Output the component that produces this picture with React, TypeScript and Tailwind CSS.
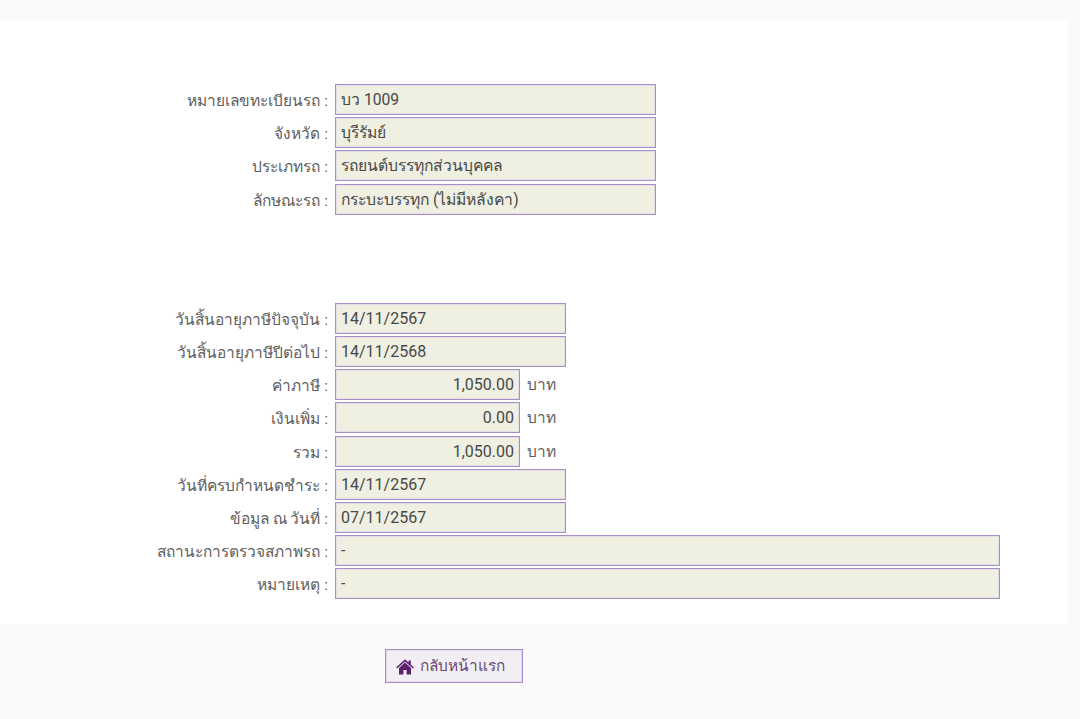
const FF = "font-['Roboto','Noto_Sans','Noto_Sans_CJK_SC',sans-serif]";

function Field({ label, value, width, right, unit, num }: { label: string; value: string; width: string; right?: boolean; unit?: boolean; num?: boolean }) {
  return (
    <div className="flex h-[33.2px] items-start">
      <div className="w-[328px] pt-[6px] text-right text-[15.5px] leading-[22px] text-[#606060]">{label} :</div>
      <div
        className={`ml-[7px] h-[31px] ${width} border border-[#a88fc6] bg-[#efefe2] pl-[5px] pr-[5px] leading-[30px] text-[#484848] shadow-[inset_0_0_0_1px_#e4dfe6] ${num ? 'text-[16px]' : 'text-[15.7px]'} ${right ? 'text-right' : ''}`}
      >
        {value}
      </div>
      {unit && <div className="ml-[7px] pt-[5px] text-[15.5px] leading-[22px] text-[#606060]">บาท</div>}
    </div>
  );
}

export default function App() {
  return (
    <div className={`h-[719px] overflow-hidden bg-[#fafafa] pt-[20px] ${FF}`}>
      <div className="h-[604px] w-[1068px] bg-white pt-[64px]">
        <Field label="หมายเลขทะเบียนรถ" value="บว 1009" width="w-[321px]" />
        <Field label="จังหวัด" value="บุรีรัมย์" width="w-[321px]" />
        <Field label="ประเภทรถ" value="รถยนต์บรรทุกส่วนบุคคล" width="w-[321px]" />
        <Field label="ลักษณะรถ" value="กระบะบรรทุก (ไม่มีหลังคา)" width="w-[321px]" />
        <div className="h-[86px]" />
        <Field label="วันสิ้นอายุภาษีปัจจุบัน" value="14/11/2567" width="w-[231px]" num />
        <Field label="วันสิ้นอายุภาษีปีต่อไป" value="14/11/2568" width="w-[231px]" num />
        <Field label="ค่าภาษี" value="1,050.00" width="w-[185px]" right unit num />
        <Field label="เงินเพิ่ม" value="0.00" width="w-[185px]" right unit num />
        <Field label="รวม" value="1,050.00" width="w-[185px]" right unit num />
        <Field label="วันที่ครบกำหนดชำระ" value="14/11/2567" width="w-[231px]" num />
        <Field label="ข้อมูล ณ วันที่" value="07/11/2567" width="w-[231px]" num />
        <Field label="สถานะการตรวจสภาพรถ" value="-" width="w-[665px]" />
        <Field label="หมายเหตุ" value="-" width="w-[665px]" />
      </div>
      <div className="ml-[385px] mt-[25px] flex h-[34px] w-[138px] items-center border border-[#a88fc6] bg-[#f1eff3] pl-[10px] pt-[1px] text-[15.4px] text-[#674a76] shadow-[inset_0_0_0_1px_#e0d8e8]">
        <svg viewBox="0 0 18 16" className="mr-[6px] h-[16px] w-[18px]" fill="#5c1f6e">
          <path d="M9 0.3 0.2 8.4l.9 1L9 2.4l7.9 7 .9-1L14.8 5.6V1.5h-2.2v2.1L9 0.3Z" />
          <path d="M9 3.6 3 8.9V15.5h4.4v-4.5h3.2v4.5H15V8.9L9 3.6Z" />
        </svg>
        กลับหน้าแรก
      </div>
    </div>
  );
}
